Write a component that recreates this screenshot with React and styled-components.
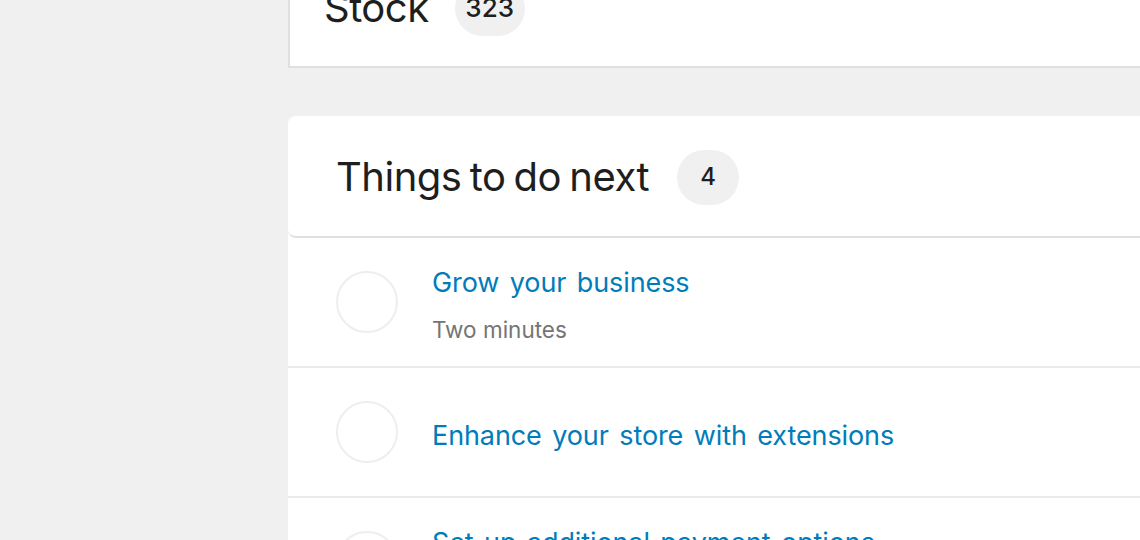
import styled, { createGlobalStyle } from "styled-components";

const GlobalStyle = createGlobalStyle`
  html, body {
    margin: 0;
    padding: 0;
    background: #f0f0f0;
    overflow: hidden;
  }
  body {
    font-family: Inter, "Liberation Sans", sans-serif;
    color: #1e1e1e;
  }
`;

const TASKS = [
  { title: "Grow your business", time: "Two minutes" },
  { title: "Enhance your store with extensions" },
  { title: "Set up additional payment options", time: "Two minutes" },
];

export default function App() {
  return (
    <>
      <GlobalStyle />
      <Page>
        <StockCard>
          <Heading $gap={26}>
            Stock <Badge $wide>323</Badge>
          </Heading>
        </StockCard>
        <TaskCard>
          <TaskHeader>
            <Heading $gap={28}>
              Things to do next <Badge>4</Badge>
            </Heading>
          </TaskHeader>
          {TASKS.map((task) => (
            <TaskRow key={task.title}>
              <Check />
              <TaskText>
                <TaskTitle>{task.title}</TaskTitle>
                {task.time && <TaskTime>{task.time}</TaskTime>}
              </TaskText>
            </TaskRow>
          ))}
        </TaskCard>
      </Page>
    </>
  );
}

const Page = styled.div`
  margin: -70px 0 0 288px;
  width: 1000px;
  display: flex;
  flex-direction: column;
  gap: 48px;
`;

const StockCard = styled.div`
  background: #fff;
  border-left: 2px solid #e0e0e0;
  border-bottom: 2px solid #e0e0e0;
  padding: 50px 34px 30px;
`;

const Heading = styled.h2`
  margin: 0;
  display: flex;
  align-items: center;
  gap: ${(p) => p.$gap}px;
  font-size: 40px;
  font-weight: 400;
  line-height: 56px;
  letter-spacing: -0.5px;
  word-spacing: -2.5px;
`;

const Badge = styled.span`
  display: inline-flex;
  align-items: center;
  justify-content: center;
  width: ${(p) => (p.$wide ? "70px" : "62px")};
  height: 55px;
  border-radius: 28px;
  background: #f0f0f0;
  font-size: ${(p) => (p.$wide ? "26px" : "24px")};
  font-weight: 500;
  letter-spacing: 0;
  color: #1e1e1e;
`;

const TaskCard = styled.div`
  background: #fff;
  border-top-left-radius: 8px;
`;

const TaskHeader = styled.div`
  padding: 33px 48px 31px;
  border-radius: 8px;
  border-bottom: 2px solid #e0e0e0;
`;

const TaskRow = styled.div`
  display: flex;
  align-items: center;
  gap: 34px;
  height: 128px;
  padding: 0 48px;
  border-bottom: 2px solid #eaeaea;
`;

const Check = styled.span`
  flex: none;
  width: 62px;
  height: 62px;
  box-sizing: border-box;
  border-radius: 50%;
  border: 2px solid #eeeeee;
`;

const TaskText = styled.div`
  display: flex;
  flex-direction: column;
  gap: 17px;
  margin-top: 7px;
`;

const TaskTitle = styled.span`
  font-size: 27px;
  line-height: 32px;
  color: #007cba;
  word-spacing: 3px;
  letter-spacing: -0.1px;
`;

const TaskTime = styled.span`
  font-size: 22.5px;
  line-height: 28px;
  color: #757575;
`;
